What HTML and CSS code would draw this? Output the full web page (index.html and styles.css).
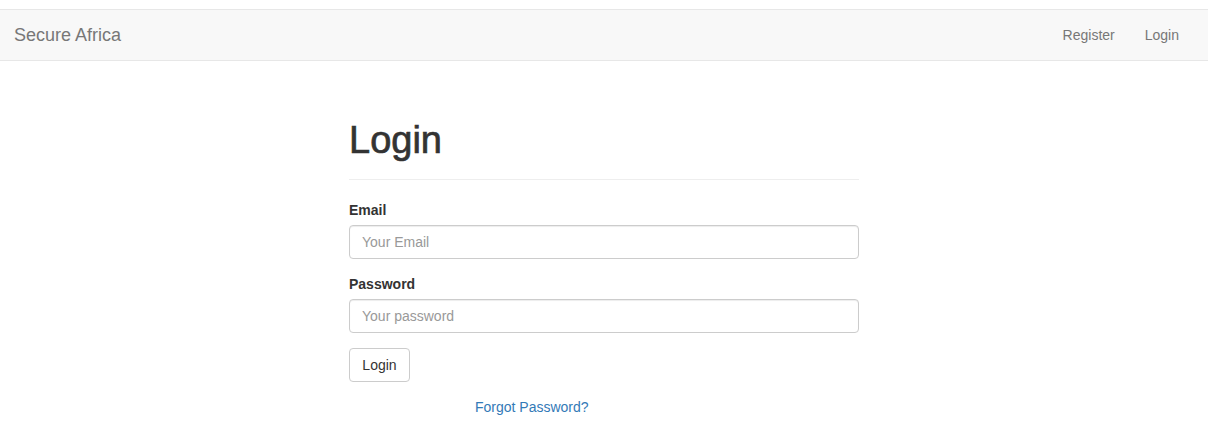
FILE: index.html
```html
<!DOCTYPE html>
<html lang="en">
<head>
<meta charset="utf-8">
<title>Secure Africa - Login</title>
<link rel="stylesheet" href="styles.css">
</head>
<body>
<nav class="navbar">
  <a class="brand" href="#">Secure Africa</a>
  <ul class="nav">
    <li><a href="#">Register</a></li>
    <li><a href="#">Login</a></li>
  </ul>
</nav>
<main class="content">
  <div class="page-header"><h1>Login</h1></div>
  <form class="form">
    <div class="form-group">
      <label for="email">Email</label>
      <input id="email" type="email" class="form-control" placeholder="Your Email">
    </div>
    <div class="form-group">
      <label for="password">Password</label>
      <input id="password" type="password" class="form-control" placeholder="Your password">
    </div>
    <button type="button" class="btn">Login</button>
  </form>
  <p class="forgot"><a href="#">Forgot Password?</a></p>
</main>
</body>
</html>
```
FILE: styles.css
```css
* { box-sizing: border-box; }
html, body { margin: 0; padding: 0; }
body {
  font-family: "Liberation Sans", Arial, sans-serif;
  font-size: 14px;
  line-height: 20px;
  color: #333;
  background: #fff;
}
a { text-decoration: none; }
.navbar {
  margin-top: 9px;
  height: 52px;
  background: #f8f8f8;
  border-top: 1px solid #e7e7e7;
  border-bottom: 1px solid #e7e7e7;
  display: flex;
  justify-content: space-between;
  align-items: stretch;
  padding: 0 14px;
}
.brand {
  font-size: 18px;
  line-height: 20px;
  padding: 15px 0;
  color: #777;
}
.nav {
  list-style: none;
  margin: 0;
  padding: 0;
  display: flex;
}
.nav a {
  display: block;
  padding: 15px 15px;
  color: #777;
  line-height: 20px;
}
.content {
  width: 510px;
  margin: 0 auto;
  padding-top: 19px;
}
.page-header {
  margin: 40px 0 20px;
  padding-bottom: 9px;
  border-bottom: 1px solid #eee;
}
.page-header h1 {
  margin: 0 0 10px;
  font-size: 38px;
  font-weight: 500;
  line-height: 40px;
  color: #333;
  -webkit-text-stroke: 0.7px #333;
}
.form-group { margin-bottom: 15px; }
label {
  display: block;
  font-weight: bold;
  margin-bottom: 5px;
}
.form-control {
  display: block;
  width: 100%;
  height: 34px;
  padding: 6px 12px;
  font-family: inherit;
  font-size: 14px;
  color: #555;
  background: #fff;
  border: 1px solid #ccc;
  border-radius: 4px;
  box-shadow: inset 0 1px 1px rgba(0,0,0,.075);
}
.form-control::placeholder { color: #999; }
.btn {
  display: inline-block;
  height: 34px;
  min-width: 61px;
  padding: 6px 12px;
  font-family: inherit;
  font-size: 14px;
  line-height: 20px;
  color: #333;
  background: #fff;
  border: 1px solid #ccc;
  border-radius: 4px;
}
.forgot {
  margin: 15px 0 0;
  padding-left: 126px;
}
.forgot a { color: #337ab7; }
```
